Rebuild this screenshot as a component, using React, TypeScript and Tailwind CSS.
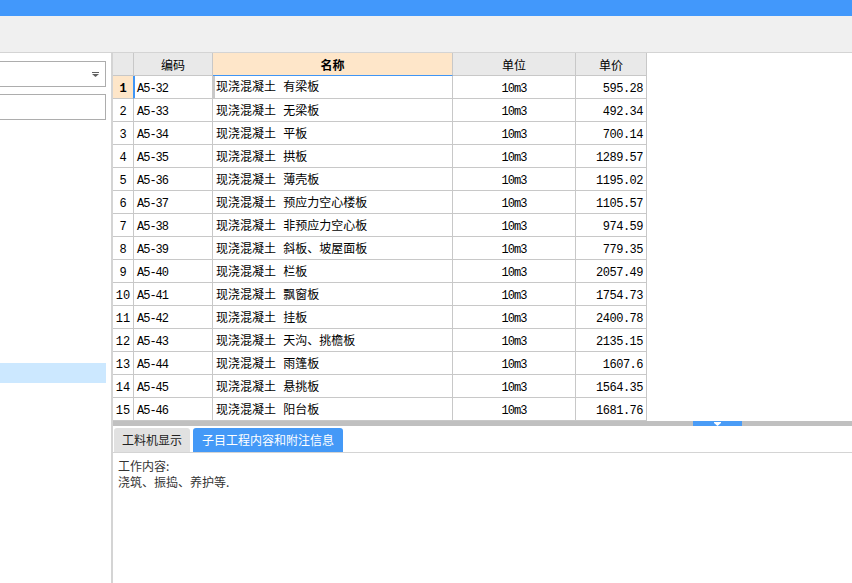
import React from "react";

// ─── Data ─────────────────────────────────────────────────────────────────────

interface Row {
  code: string;
  name: string;
  unit: string;
  price: string;
}

const rows: Row[] = [
  { code: "A5-32", name: "现浇混凝土 有梁板", unit: "10m3", price: "595.28" },
  { code: "A5-33", name: "现浇混凝土 无梁板", unit: "10m3", price: "492.34" },
  { code: "A5-34", name: "现浇混凝土 平板", unit: "10m3", price: "700.14" },
  { code: "A5-35", name: "现浇混凝土 拱板", unit: "10m3", price: "1289.57" },
  { code: "A5-36", name: "现浇混凝土 薄壳板", unit: "10m3", price: "1195.02" },
  { code: "A5-37", name: "现浇混凝土 预应力空心楼板", unit: "10m3", price: "1105.57" },
  { code: "A5-38", name: "现浇混凝土 非预应力空心板", unit: "10m3", price: "974.59" },
  { code: "A5-39", name: "现浇混凝土 斜板、坡屋面板", unit: "10m3", price: "779.35" },
  { code: "A5-40", name: "现浇混凝土 栏板", unit: "10m3", price: "2057.49" },
  { code: "A5-41", name: "现浇混凝土 飘窗板", unit: "10m3", price: "1754.73" },
  { code: "A5-42", name: "现浇混凝土 挂板", unit: "10m3", price: "2400.78" },
  { code: "A5-43", name: "现浇混凝土 天沟、挑檐板", unit: "10m3", price: "2135.15" },
  { code: "A5-44", name: "现浇混凝土 雨篷板", unit: "10m3", price: "1607.6" },
  { code: "A5-45", name: "现浇混凝土 悬挑板", unit: "10m3", price: "1564.35" },
  { code: "A5-46", name: "现浇混凝土 阳台板", unit: "10m3", price: "1681.76" },
];

const cjk = "font-['Noto_Sans_CJK_SC',sans-serif]";
const mono = "font-['Liberation_Mono','Noto_Sans_CJK_SC',monospace]";
const cell = "h-[23px] flex items-center border-r border-b border-[#c8c8c8] text-[12px] text-black";

// ─── Left panel ───────────────────────────────────────────────────────────────

function LeftPanel() {
  return (
    <aside className="flex w-[113px] flex-shrink-0 flex-col border-r-2 border-[#d4d4d4] pt-2">
      <div className="flex h-[26px] w-[106px] items-center justify-end border border-l-0 border-[#adadad] bg-white pr-[6px]">
        <svg width="7" height="5" viewBox="0 0 7 5">
          <rect x="0" y="0" width="7" height="1" fill="#606060" />
          <path d="M0 2 H7 L3.5 5 Z" fill="#606060" />
        </svg>
      </div>
      <div className="mt-[7px] h-[26px] w-[106px] border border-l-0 border-[#adadad] bg-white" />
      <div className="mt-[243px] h-[20px] w-[106px] bg-[#cce8ff]" />
    </aside>
  );
}

// ─── Grid ─────────────────────────────────────────────────────────────────────

function HeaderRow() {
  return (
    <div className={`flex ${cjk}`}>
      <div className={`${cell} w-[21px] bg-[#e9e9e9]`} />
      <div className={`${cell} w-[79px] justify-center bg-[#e9e9e9] pt-[2px]`}>编码</div>
      <div className={`${cell} w-[240px] justify-center border-b-[#3f95f5] bg-[#fee6c9] pt-[2px] font-bold`}>名称</div>
      <div className={`${cell} w-[123px] justify-center bg-[#e9e9e9] pt-[2px]`}>单位</div>
      <div className={`${cell} w-[71px] justify-center bg-[#e9e9e9] pt-[2px]`}>单价</div>
    </div>
  );
}

function DataRow({ row, index }: { row: Row; index: number }) {
  const first = index === 0;
  return (
    <div className={`flex ${mono}`}>
      <div
        className={`${cell} w-[21px] justify-center pt-[3px] ${
          first ? "border-r-[#3f95f5] bg-[#fee6c9] font-bold" : "bg-white"
        }`}
      >
        {index + 1}
      </div>
      <div
        className={`${cell} w-[79px] pl-[3px] pt-[3px] tracking-[-1px] ${
          first ? "shadow-[inset_1px_0_0_#3f95f5]" : ""
        }`}
      >
        {row.code}
      </div>
      <div
        className={`${cell} w-[240px] whitespace-pre ${
          first ? "border-2 border-t-0 border-[#7f7f7f] pl-px pt-[2px]" : "pl-[3px] pt-[3px]"
        }`}
      >
        {row.name}
      </div>
      <div className={`${cell} w-[123px] justify-center pt-[3px] tracking-[-1px]`}>{row.unit}</div>
      <div className={`${cell} w-[71px] justify-end pr-[3px] pt-[3px] tracking-[-0.5px]`}>{row.price}</div>
    </div>
  );
}

// ─── App ──────────────────────────────────────────────────────────────────────

export default function App() {
  return (
    <div className="flex h-[583px] w-[852px] flex-col overflow-hidden bg-white">
      {/* Title bar */}
      <div className="h-4 flex-shrink-0 bg-[#4298fb]" />
      {/* Toolbar */}
      <div className="h-[37px] flex-shrink-0 border-b border-[#d4d4d4] bg-[#f0f0f0]" />

      <div className="flex min-h-0 flex-1">
        <LeftPanel />

        <main className="flex min-w-0 flex-1 flex-col">
          {/* Quota grid */}
          <div className="h-[368px] flex-shrink-0">
            <HeaderRow />
            {rows.map((row, i) => (
              <DataRow key={row.code} row={row} index={i} />
            ))}
          </div>

          {/* Splitter */}
          <div className="flex h-[5px] flex-shrink-0 bg-[#c0c0c0]">
            <div className="w-[580px]" />
            <div className="flex w-[49px] items-center justify-center bg-[#4a9cf6]">
              <svg width="7" height="4" viewBox="0 0 7 4">
                <rect x="0" y="0" width="7" height="1" fill="#ffffff" />
                <path d="M0 1 H7 L3.5 4 Z" fill="#ffffff" />
              </svg>
            </div>
          </div>

          {/* Tabs */}
          <div className={`mt-[2px] flex h-[25px] flex-shrink-0 items-end gap-[3px] border-b border-[#d4d4d4] pl-px text-[12px] ${cjk}`}>
            <div className="flex h-[24px] items-center rounded-t-[3px] bg-[#e1e1e1] px-2 text-[#222]">工料机显示</div>
            <div className="flex h-[24px] items-center rounded-t-[3px] bg-[#4499f7] px-[9px] text-white">子目工程内容和附注信息</div>
          </div>

          {/* Tab content */}
          <div className={`flex-1 pl-[5px] pt-[5px] text-[12px] leading-4 text-[#333] ${cjk}`}>
            <div>工作内容:</div>
            <div>浇筑、振捣、养护等.</div>
          </div>
        </main>
      </div>
    </div>
  );
}
